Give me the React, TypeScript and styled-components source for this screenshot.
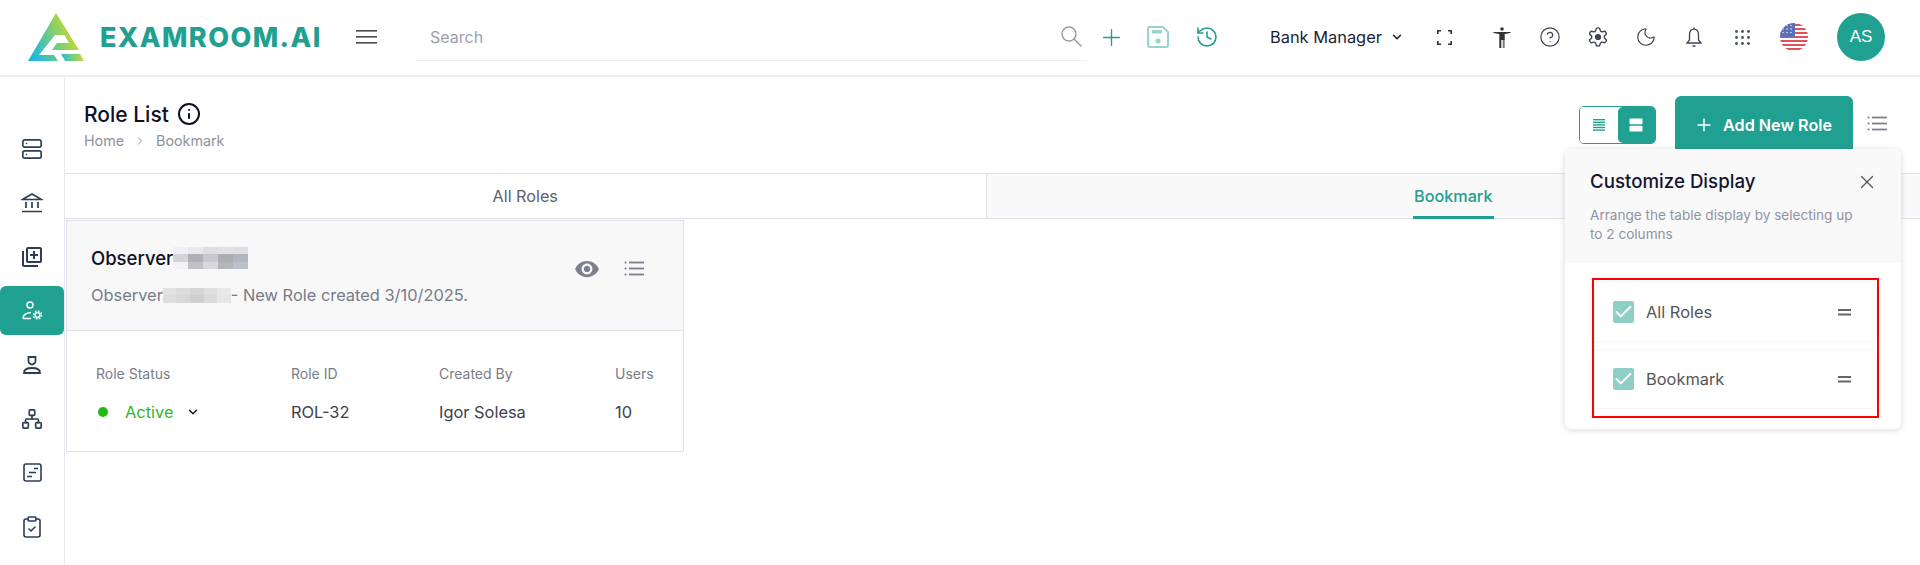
import * as React from 'react';
import styled, { createGlobalStyle } from 'styled-components';
import { Plus, History, ChevronDown, ChevronRight, CircleHelp, Moon, Info, X, Server, Network, ClipboardCheck, Check } from 'lucide-react';
import { MdVisibility, MdOutlineLibraryAdd } from 'react-icons/md';

const teal = '#20a090';

const GlobalStyle = createGlobalStyle`
    html, body {
        margin: 0;
        padding: 0;
        background: #fff;
        font-family: Inter, "Liberation Sans", sans-serif;
    }
    * {
        box-sizing: border-box;
    }
`;

const Page = styled.div`
    position: relative;
    width: 1920px;
    height: 565px;
    overflow: hidden;
    display: flex;
    flex-direction: column;
`;

const Header = styled.header`
    height: 77px;
    flex: none;
    display: flex;
    align-items: center;
    border-bottom: 2px solid #eeeff3;
    padding: 0 0 1px 28px;
`;

const Brand = styled.div`
    width: 328px;
    display: flex;
    align-items: center;
    gap: 16px;
`;

const BrandName = styled.span`
    font-family: Inter, sans-serif;
    font-size: 27px;
    font-weight: 800;
    letter-spacing: 1.4px;
    color: ${teal};
    line-height: 1;
`;

const Hamburger = styled.div`
    width: 59px;
    display: flex;
`;

const SearchBox = styled.div`
    width: 672px;
    height: 48px;
    padding: 0 5px 0 15px;
    display: flex;
    align-items: center;
    justify-content: space-between;
    border-bottom: 1px solid #eeeff3;
    color: #9a9fae;
    font-size: 16px;
`;

const HeaderIcon = styled.div<{ $w?: number; $color?: string; $gap?: number }>`
    width: ${(p) => p.$w || 48}px;
    margin-left: ${(p) => p.$gap || 0}px;
    flex: none;
    display: flex;
    justify-content: center;
    align-items: center;
    color: ${(p) => p.$color || '#3f4254'};
`;

const RoleSelect = styled.div`
    margin-left: 37px;
    width: 150px;
    display: flex;
    align-items: center;
    gap: 8px;
    font-size: 16.4px;
    color: #1a1f36;
`;

const Flag = styled.div`
    width: 28px;
    height: 28px;
    margin: 0 29px 0 14px;
    flex: none;
    border-radius: 50%;
    overflow: hidden;
    display: flex;
`;

const Avatar = styled.div`
    width: 48px;
    height: 48px;
    flex: none;
    border-radius: 50%;
    background: ${teal};
    color: #fff;
    font-family: "Liberation Sans", sans-serif;
    font-size: 17px;
    display: flex;
    align-items: center;
    justify-content: center;
`;

const Body = styled.div`
    flex: 1;
    display: flex;
    min-height: 0;
`;

const Sidebar = styled.nav`
    width: 65px;
    flex: none;
    border-right: 1px solid #e8e9ef;
    padding-top: 47px;
    display: flex;
    flex-direction: column;
`;

const SideItem = styled.div<{ $active?: boolean }>`
    width: 64px;
    height: 49px;
    margin-bottom: 5px;
    border-radius: ${(p) => (p.$active ? '6px' : '0')};
    display: flex;
    align-items: center;
    justify-content: center;
    color: ${(p) => (p.$active ? '#fff' : '#2e3d55')};
    background: ${(p) => (p.$active ? teal : 'transparent')};
`;

const Main = styled.main`
    flex: 1;
    min-width: 0;
    display: flex;
    flex-direction: column;
`;

const TitleBar = styled.div`
    height: 96px;
    flex: none;
    padding: 19px 33px 0 19px;
    display: flex;
    justify-content: space-between;
    align-items: flex-start;
`;

const TitleBlock = styled.div`
    padding-top: 6px;
`;

const TitleRow = styled.div`
    display: flex;
    align-items: center;
    gap: 8px;
    height: 24px;
    color: #0d1026;
`;

const Title = styled.h1`
    margin: 0;
    font-size: 21px;
    font-weight: 500;
`;

const Crumbs = styled.div`
    margin-top: 6px;
    display: flex;
    align-items: center;
    gap: 10px;
    font-size: 14.3px;
    color: #8d92a0;
`;

const Actions = styled.div`
    display: flex;
    align-items: flex-start;
`;

const ViewToggle = styled.div`
    width: 77px;
    height: 38px;
    margin-top: 10px;
    border: 1px solid ${teal};
    border-radius: 5px;
    overflow: hidden;
    display: flex;
`;

const ToggleSide = styled.div<{ $on?: boolean }>`
    flex: 1;
    display: flex;
    align-items: center;
    justify-content: center;
    border-radius: ${(p) => (p.$on ? '5px 0 0 5px' : '0')};
    background: ${(p) => (p.$on ? teal : '#fff')};
`;

const AddButton = styled.div`
    width: 178px;
    height: 64px;
    margin: 0 14px 0 19px;
    border-radius: 6px;
    background: ${teal};
    color: #fff;
    font-size: 16.2px;
    font-weight: 600;
    display: flex;
    align-items: center;
    gap: 9px;
    padding: 0 0 6px 19px;
    white-space: nowrap;
`;

const ListBtn = styled.div`
    margin-top: 20px;
    color: #7c7f90;
    display: flex;
`;

const Tabs = styled.div`
    height: 46px;
    flex: none;
    display: flex;
    border-top: 1px solid #dfe2ec;
    border-bottom: 1px solid #dfe2ec;
`;

const Tab = styled.div<{ $active?: boolean }>`
    flex: ${(p) => (p.$active ? '934' : '921')} 0 0;
    position: relative;
    display: flex;
    align-items: center;
    justify-content: center;
    font-size: 16.2px;
    font-weight: ${(p) => (p.$active ? 500 : 400)};
    color: ${(p) => (p.$active ? teal : '#5b5f6e')};
    background: ${(p) => (p.$active ? '#f9f9f9' : '#fff')};
    border-left: ${(p) => (p.$active ? '1px solid #dfe2ec' : '0')};
`;

const TabLine = styled.span`
    position: absolute;
    left: 50%;
    bottom: -1px;
    width: 81px;
    margin-left: -40px;
    height: 3px;
    background: ${teal};
`;

const Card = styled.section`
    width: 618px;
    height: 232px;
    margin: 1px 0 0 1px;
    border: 1px solid #dfe2ec;
`;

const CardHead = styled.div`
    height: 110px;
    background: #f8f8f8;
    border-bottom: 1px solid #dfe2ec;
    padding: 25px 39px 0 24px;
    display: flex;
    justify-content: space-between;
`;

const CardName = styled.div`
    display: flex;
    align-items: center;
    height: 24px;
    font-size: 18.5px;
    font-weight: 500;
    color: #0d1026;
`;

const CardDesc = styled.div`
    margin-top: 15px;
    display: flex;
    align-items: center;
    font-size: 16.4px;
    color: #777b88;
`;

const CardTools = styled.div`
    display: flex;
    align-items: center;
    gap: 24px;
    height: 45px;
    color: #7c7f90;
`;

const Pixelated = styled.div<{ $cols: number }>`
    display: grid;
    grid-template-columns: repeat(${(p) => p.$cols}, 1fr);
    grid-auto-rows: 1fr;
`;

const CardBody = styled.div`
    display: grid;
    grid-template-columns: 195px 148px 176px auto;
    padding: 34px 0 0 29px;
`;

const ColLabel = styled.div`
    font-size: 14px;
    color: #7a7d89;
    margin-bottom: 20px;
`;

const ColValue = styled.div`
    font-size: 16.4px;
    color: #3d404d;
`;

const StatusValue = styled.div`
    display: flex;
    align-items: center;
    font-size: 16.4px;
    color: #2fb81d;
`;

const Dot = styled.span`
    width: 10px;
    height: 10px;
    border-radius: 50%;
    background: #22bb14;
    margin: 0 17px 0 2px;
`;

const StatusCaret = styled.span`
    display: flex;
    margin-left: 13px;
    color: #1a1f36;
`;

const Popup = styled.aside`
    position: absolute;
    left: 1565px;
    top: 149px;
    width: 336px;
    height: 280px;
    border-radius: 6px;
    background: #fff;
    box-shadow: 0 1px 6px rgba(40, 45, 70, 0.18);
    overflow: hidden;
`;

const PopupHead = styled.div`
    height: 114px;
    background: #f9f9fa;
    padding: 19px 23px 0 25px;
`;

const PopupTitleRow = styled.div`
    display: flex;
    justify-content: space-between;
    align-items: center;
    font-size: 18.7px;
    font-weight: 500;
    color: #12162e;
    line-height: 28px;
`;

const PopupHint = styled.p`
    margin: 10px 0 0;
    font-size: 13.6px;
    line-height: 19px;
    color: #9093a2;
`;

const Marked = styled.div`
    position: relative;
    margin: 15px 0 0 27px;
    width: 287px;
    height: 140px;
    padding: 4px 0 0 0;
    &::after {
        content: '';
        position: absolute;
        inset: 0;
        border: 2px solid #f00;
        pointer-events: none;
    }
`;

const ColumnRow = styled.div`
    height: 60px;
    margin: 0 0 7px -3px;
    width: 288px;
    border: 1px solid #f4f4f6;
    border-radius: 6px;
    padding: 0 25px 0 23px;
    display: flex;
    align-items: center;
    font-size: 16.4px;
    color: #555;
`;

const Tick = styled.span`
    width: 21px;
    height: 22px;
    margin-right: 12px;
    border-radius: 2px;
    background: #8fcfc8;
    color: #fff;
    display: flex;
    align-items: center;
    justify-content: center;
`;

const RowGrip = styled.span`
    margin-left: auto;
    display: flex;
`;

const LogoMark = () => (
    <svg width="56" height="48" viewBox="0 0 56 48">
        <defs>
            <linearGradient id="lg" gradientUnits="userSpaceOnUse" x1="3" y1="48" x2="50" y2="26">
                <stop offset="0" stopColor="#17b6e6" />
                <stop offset="0.45" stopColor="#5cc79a" />
                <stop offset="1" stopColor="#c9dc24" />
            </linearGradient>
            <linearGradient id="lb" x1="0" y1="0" x2="1" y2="0">
                <stop offset="0" stopColor="#28bcd6" />
                <stop offset="1" stopColor="#c4dc30" />
            </linearGradient>
        </defs>
        <path
            d="M28 0 L51 37 L24 37 L29 30 L41 30 L36.5 22 L27 22 L11 42 L26 42 L30 48 L0 48 Z"
            fill="url(#lg)"
        />
        <path d="M33 41 L52 41 L56 48 L37 48 Z" fill="url(#lb)" />
    </svg>
);

const MenuIcon = () => (
    <svg width="21" height="14" viewBox="0 0 21 14" fill="#4a4a4a">
        <rect y="0" width="21" height="1.6" />
        <rect y="6" width="21" height="1.6" />
        <rect y="12" width="21" height="1.6" />
    </svg>
);

const SearchIcon = () => (
    <svg width="21" height="21" viewBox="0 0 21 21" fill="none" stroke="#9a9aa0" strokeWidth="1.4">
        <circle cx="8" cy="8" r="7" />
        <path d="M13 13 L20.5 20.5" />
    </svg>
);

const SaveIcon = () => (
    <svg width="22" height="22" viewBox="0 0 22 22" fill="none">
        <path d="M3 1h13l5 5v13a2 2 0 0 1-2 2H3a2 2 0 0 1-2-2V3a2 2 0 0 1 2-2z" stroke="#98d4cc" strokeWidth="2" />
        <rect x="5" y="4" width="10" height="3.5" fill="#98d4cc" />
        <circle cx="11" cy="15" r="2.5" fill="#98d4cc" />
    </svg>
);

const CornersIcon = () => (
    <svg width="15" height="15" viewBox="0 0 15 15" fill="none" stroke="#2c2f3e" strokeWidth="1.6">
        <path d="M.8 4V.8H4M11 .8h3.2V4M14.2 11v3.2H11M4 14.2H.8V11" />
    </svg>
);

const FigureIcon = () => (
    <svg width="18" height="21" viewBox="0 0 18 21" fill="#333">
        <circle cx="9" cy="2" r="1.8" />
        <path d="M0.5 5 L17.5 5 L17.5 6 L11.7 7 V13 H6.3 V7 L0.5 6 Z" />
        <rect x="6.3" y="13" width="2" height="8" />
        <rect x="9.7" y="13" width="2" height="8" fill="#777" />
    </svg>
);

const GearIcon = () => (
    <svg width="22" height="22" viewBox="0 0 24 24" fill="none" stroke="#3f4254" strokeWidth="1.5">
        <path d="M12.22 2h-.44a2 2 0 0 0-2 2v.18a2 2 0 0 1-1 1.73l-.43.25a2 2 0 0 1-2 0l-.15-.08a2 2 0 0 0-2.73.73l-.22.38a2 2 0 0 0 .73 2.73l.15.1a2 2 0 0 1 1 1.72v.51a2 2 0 0 1-1 1.74l-.15.09a2 2 0 0 0-.73 2.73l.22.38a2 2 0 0 0 2.73.73l.15-.08a2 2 0 0 1 2 0l.43.25a2 2 0 0 1 1 1.73V20a2 2 0 0 0 2 2h.44a2 2 0 0 0 2-2v-.18a2 2 0 0 1 1-1.73l.43-.25a2 2 0 0 1 2 0l.15.08a2 2 0 0 0 2.73-.73l.22-.39a2 2 0 0 0-.73-2.73l-.15-.08a2 2 0 0 1-1-1.74v-.5a2 2 0 0 1 1-1.74l.15-.09a2 2 0 0 0 .73-2.73l-.22-.38a2 2 0 0 0-2.73-.73l-.15.08a2 2 0 0 1-2 0l-.43-.25a2 2 0 0 1-1-1.73V4a2 2 0 0 0-2-2z" />
        <circle cx="12" cy="12" r="3.4" fill="#3f4254" stroke="none" />
    </svg>
);

const BellIcon = () => (
    <svg width="16" height="21" viewBox="0 0 16 21" fill="none" stroke="#3f4254" strokeWidth="1.3">
        <path d="M8 2.2C5 2.2 3.5 4.7 3.5 7.7V13L1 16h14l-2.5-3V7.7C12.5 4.7 11 2.2 8 2.2z" />
        <path d="M8 .5v1.7M6.5 19h3" />
    </svg>
);

const DotsIcon = () => (
    <svg width="15" height="15" viewBox="0 0 15 15" fill="#4a5060">
        {[1.5, 7.5, 13.5].map((y) =>
            [1.5, 7.5, 13.5].map((x) => <circle key={`${x}-${y}`} cx={x} cy={y} r="1.4" />)
        )}
    </svg>
);

const LinesIcon = () => (
    <svg width="14" height="14" viewBox="0 0 14 14" fill={teal}>
        {[1, 3.6, 6.2, 8.8, 11.4].map((y) => (
            <rect key={y} x="1" y={y} width="12" height="1.4" />
        ))}
    </svg>
);

const SplitIcon = () => (
    <svg width="14" height="14" viewBox="0 0 14 14" fill="#fff">
        <rect x="0.5" y="0.5" width="13" height="5.8" rx="1" />
        <rect x="0.5" y="7.7" width="13" height="5.8" rx="1" />
    </svg>
);

const ListIcon = () => (
    <svg width="20" height="15" viewBox="0 0 20 15" fill="none" stroke="currentColor" strokeWidth="1.8">
        {[1.5, 7.5, 13.5].map((y) => (
            <React.Fragment key={y}>
                <circle cx="1.5" cy={y} r="1.1" fill="currentColor" stroke="none" />
                <path d={`M5 ${y}h15`} />
            </React.Fragment>
        ))}
    </svg>
);

const GripIcon = () => (
    <svg width="13" height="7" viewBox="0 0 13 7" fill="#666">
        <rect width="13" height="2" />
        <rect y="4.5" width="13" height="2" />
    </svg>
);

const BankIcon = () => (
    <svg width="22" height="20" viewBox="0 0 22 20" fill="none" stroke="currentColor" strokeWidth="1.7">
        <path d="M1.5 6.5 L11 1 L20.5 6.5z" />
        <path d="M5 9v6M11 9v6M17 9v6M1 18.5h20" />
    </svg>
);

const RoleGearIcon = () => (
    <svg width="22" height="20" viewBox="0 0 22 20" fill="none" stroke="currentColor" strokeWidth="1.5">
        <circle cx="9" cy="4" r="3" />
        <path d="M2 17.5c0-3.5 3-5.500 8-6M2 17.500h8" />
        <circle cx="16.5" cy="14" r="2.4" />
        <circle cx="16.5" cy="14" r="4" strokeDasharray="1.6 1.54" />
    </svg>
);

const ProctorIcon = () => (
    <svg width="18" height="18" viewBox="0 0 18 18" fill="none" stroke="currentColor" strokeWidth="1.8">
        <path d="M5.5 1v4a3.5 3.5 0 0 0 7 0V1z" />
        <path d="M1 17c0-3.5 3-5 8-5s8 1.5 8 5z" />
    </svg>
);

const ScheduleIcon = () => (
    <svg width="19" height="19" viewBox="0 0 19 19" fill="none" stroke="currentColor" strokeWidth="1.6">
        <rect x="1" y="1" width="17" height="17" rx="2" />
        <path d="M11 5.5h4M6 9.5h7M4 13.5h5" />
    </svg>
);

const UsFlag = () => (
    <svg width="28" height="28" viewBox="0 0 28 28">
        <rect width="28" height="28" fill="#fff" />
        {[0, 4, 8, 12, 16, 20, 24].map((y) => (
            <rect key={y} y={y + 1} width="28" height="2" fill="#e4505a" />
        ))}
        <rect width="15" height="14" fill="#5a6fb5" />
        {[2.5, 6, 9.5].map((y) =>
            [3, 7, 11].map((x) => <circle key={`${x}-${y}`} cx={x} cy={y} r="0.8" fill="#dfe4f2" />)
        )}
    </svg>
);

const blurA = ['#f0f0f2', '#e9e9ec', '#dedee2', '#e2e2e6', '#e0e0e4', '#d4d4d8', '#b0b0b8', '#c8c8ce', '#acacb4', '#b4b4bc', '#f2f2f4', '#c0c0c6', '#d8d8dc', '#b4b4ba', '#bcc0cc'];
const blurB = ['#e2e2e2', '#dcdcdc', '#d6d6d6', '#e0e0e0', '#e8e8e8', '#dedede', '#d8d8d8', '#d0d0d0', '#dcdcdc', '#e6e6e6'];

const Smudge = ({ cells, cols, w, h }: { cells: string[]; cols: number; w: number; h: number }) => (
    <Pixelated $cols={cols} style={{ width: w, height: h }}>
        {cells.map((c, i) => (
            <span key={i} style={{ background: c }} />
        ))}
    </Pixelated>
);

const sideIcons = [
    <Server size={22} strokeWidth={1.8} />,
    <BankIcon />,
    <MdOutlineLibraryAdd size={24} />,
    <RoleGearIcon />,
    <ProctorIcon />,
    <Network size={22} strokeWidth={1.8} />,
    <ScheduleIcon />,
    <ClipboardCheck size={24} strokeWidth={1.6} />,
];

export default function App() {
    return (
        <Page>
            <GlobalStyle />
            <Header>
                <Brand>
                    <LogoMark />
                    <BrandName>EXAMROOM.AI</BrandName>
                </Brand>
                <Hamburger>
                    <MenuIcon />
                </Hamburger>
                <SearchBox>
                    Search
                    <SearchIcon />
                </SearchBox>
                <HeaderIcon $color={teal}>
                    <Plus size={27} strokeWidth={1.2} />
                </HeaderIcon>
                <HeaderIcon $w={46}>
                    <SaveIcon />
                </HeaderIcon>
                <HeaderIcon $w={52} $color={teal}>
                    <History size={24} strokeWidth={1.6} />
                </HeaderIcon>
                <RoleSelect>
                    Bank Manager
                    <ChevronDown size={14} strokeWidth={2.6} />
                </RoleSelect>
                <HeaderIcon>
                    <CornersIcon />
                </HeaderIcon>
                <HeaderIcon $gap={10}>
                    <FigureIcon />
                </HeaderIcon>
                <HeaderIcon>
                    <CircleHelp size={22} strokeWidth={1.3} />
                </HeaderIcon>
                <HeaderIcon>
                    <GearIcon />
                </HeaderIcon>
                <HeaderIcon>
                    <Moon size={22} strokeWidth={1.3} />
                </HeaderIcon>
                <HeaderIcon>
                    <BellIcon />
                </HeaderIcon>
                <HeaderIcon>
                    <DotsIcon />
                </HeaderIcon>
                <Flag>
                    <UsFlag />
                </Flag>
                <Avatar>AS</Avatar>
            </Header>
            <Body>
                <Sidebar>
                    {sideIcons.map((icon, i) => (
                        <SideItem key={i} $active={i === 3}>
                            {icon}
                        </SideItem>
                    ))}
                </Sidebar>
                <Main>
                    <TitleBar>
                        <TitleBlock>
                            <TitleRow>
                                <Title>Role List</Title>
                                <Info size={24} strokeWidth={2} />
                            </TitleRow>
                            <Crumbs>
                                Home
                                <ChevronRight size={12} />
                                Bookmark
                            </Crumbs>
                        </TitleBlock>
                        <Actions>
                            <ViewToggle>
                                <ToggleSide>
                                    <LinesIcon />
                                </ToggleSide>
                                <ToggleSide $on>
                                    <SplitIcon />
                                </ToggleSide>
                            </ViewToggle>
                            <AddButton>
                                <Plus size={20} strokeWidth={1.8} />
                                Add New Role
                            </AddButton>
                            <ListBtn>
                                <ListIcon />
                            </ListBtn>
                        </Actions>
                    </TitleBar>
                    <Tabs>
                        <Tab>All Roles</Tab>
                        <Tab $active>
                            Bookmark
                            <TabLine />
                        </Tab>
                    </Tabs>
                    <Card>
                        <CardHead>
                            <div>
                                <CardName>
                                    Observer
                                    <Smudge cells={blurA} cols={5} w={75} h={23} />
                                </CardName>
                                <CardDesc>
                                    Observer
                                    <Smudge cells={blurB} cols={5} w={68} h={15} />- New Role created 3/10/2025.
                                </CardDesc>
                            </div>
                            <CardTools>
                                <MdVisibility size={26} />
                                <ListIcon />
                            </CardTools>
                        </CardHead>
                        <CardBody>
                            <div>
                                <ColLabel>Role Status</ColLabel>
                                <StatusValue>
                                    <Dot />
                                    Active
                                    <StatusCaret>
                                        <ChevronDown size={14} strokeWidth={2.6} />
                                    </StatusCaret>
                                </StatusValue>
                            </div>
                            <div>
                                <ColLabel>Role ID</ColLabel>
                                <ColValue>ROL-32</ColValue>
                            </div>
                            <div>
                                <ColLabel>Created By</ColLabel>
                                <ColValue>Igor Solesa</ColValue>
                            </div>
                            <div>
                                <ColLabel>Users</ColLabel>
                                <ColValue>10</ColValue>
                            </div>
                        </CardBody>
                    </Card>
                </Main>
            </Body>
            <Popup>
                <PopupHead>
                    <PopupTitleRow>
                        Customize Display
                        <X size={22} strokeWidth={1.4} color="#555" />
                    </PopupTitleRow>
                    <PopupHint>
                        Arrange the table display by selecting up
                        <br />
                        to 2 columns
                    </PopupHint>
                </PopupHead>
                <Marked>
                    {['All Roles', 'Bookmark'].map((name) => (
                        <ColumnRow key={name}>
                            <Tick>
                                <Check size={24} strokeWidth={2.2} />
                            </Tick>
                            {name}
                            <RowGrip>
                                <GripIcon />
                            </RowGrip>
                        </ColumnRow>
                    ))}
                </Marked>
            </Popup>
        </Page>
    );
}
